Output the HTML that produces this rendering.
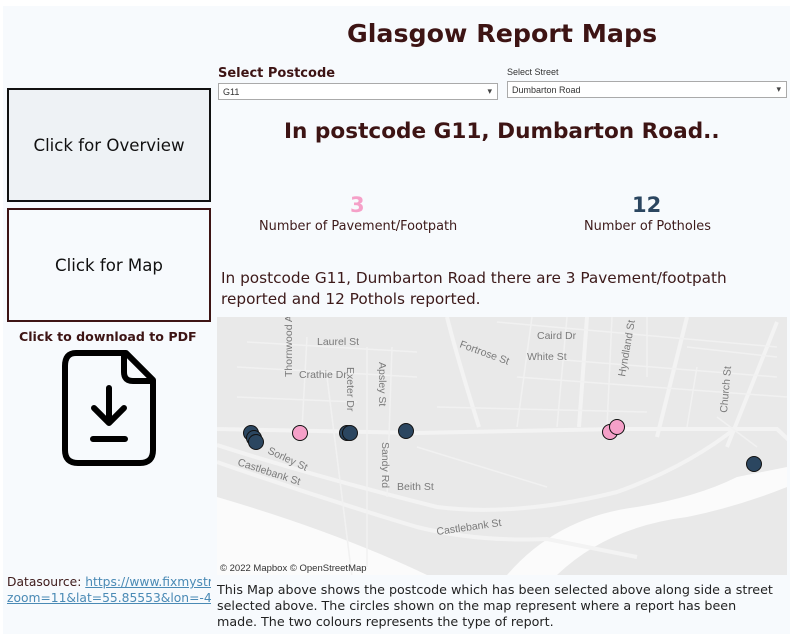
<!DOCTYPE html>
<html><head><meta charset="utf-8"><style>
*{margin:0;padding:0;box-sizing:border-box}
body{width:790px;height:634px;background:#fff;position:relative;overflow:hidden;font-family:"DejaVu Sans","Liberation Sans",sans-serif;color:#3d1a1a}
.bg{position:absolute;left:3px;top:6px;width:787px;height:628px;background:#f7fafd}
.abs{position:absolute}
.btn{position:absolute;left:7px;width:204px;border:2px solid #111;display:flex;align-items:center;justify-content:center;font-size:16.6px;color:#111}
.sel{position:absolute;height:17px;border:1px solid #aaa;background:#fff;font-size:9px;color:#333;padding:3px 0 0 4px;font-family:"Liberation Sans",sans-serif}
.sel:after{content:"▾";position:absolute;right:5px;top:2px;font-size:9px;color:#444}
</style></head><body>
<div class="bg"></div>
<div class="abs" style="left:347px;top:19px;font-size:25.3px;font-weight:bold;color:#3d1414">Glasgow Report Maps</div>
<div class="abs" style="left:218px;top:66px;font-size:13px;font-weight:bold;color:#3d1414">Select Postcode</div>
<div class="sel" style="left:218px;top:83px;width:280px">G11</div>
<div class="abs" style="left:507px;top:67px;font-size:9px;color:#333;font-family:'Liberation Sans',sans-serif">Select Street</div>
<div class="sel" style="left:507px;top:81px;width:280px">Dumbarton Road</div>
<div class="abs" style="left:284px;top:119px;font-size:21.6px;font-weight:bold;color:#3d1414">In postcode G11, Dumbarton Road..</div>
<div class="btn" style="top:88px;height:114px;background:#eef2f5">Click for Overview</div>
<div class="btn" style="top:208px;height:114px;border-color:#3d1414;background:#f7fafd">Click for Map</div>
<div class="abs" style="left:19px;top:329px;font-size:12.6px;font-weight:bold;color:#3d1414">Click to download to PDF</div>
<svg class="abs" style="left:62px;top:350px" width="94" height="116" viewBox="0 0 94 116"><path d="M14 3H64L91 30V100Q91 113 78 113H16Q3 113 3 100V16Q3 3 14 3Z" fill="none" stroke="#000" stroke-width="6" stroke-linejoin="round"/><path d="M62 4V22Q62 31 71 31H90" fill="none" stroke="#000" stroke-width="6"/><path d="M47 38V72M32 58L47 73L62 58M31 89H63" fill="none" stroke="#000" stroke-width="6" stroke-linecap="round" stroke-linejoin="round"/></svg>
<div class="abs" style="left:350px;top:193px;font-size:21px;font-weight:bold;color:#f5a0c8">3</div>
<div class="abs" style="left:259px;top:219px;font-size:12.9px;color:#3d1a1a">Number of Pavement/Footpath</div>
<div class="abs" style="left:632px;top:193px;font-size:21px;font-weight:bold;color:#2b4660">12</div>
<div class="abs" style="left:584px;top:219px;font-size:12.9px;color:#3d1a1a">Number of Potholes</div>
<div class="abs" style="left:221px;top:268px;font-size:15.3px;line-height:21px;color:#3d1a1a;width:565px">In postcode G11, Dumbarton Road there are 3 Pavement/footpath reported and 12 Pothols reported.</div>
<svg class="abs" style="left:217px;top:317px" width="570" height="258" viewBox="0 0 570 258">
<rect width="570" height="258" fill="#e9e9e9"/>
<path d="M0 180Q120 215 210 258H0Z" fill="#fbfbfb"/>
<path d="M290 258Q340 200 420 190Q480 180 520 160L570 150V170Q520 190 470 200Q390 210 340 258Z" fill="#fbfbfb"/>
<g fill="none" stroke="#f3f3f3" stroke-width="4">
<path d="M0 112L200 116L400 112L560 112L590 140"/>
<path d="M0 128Q100 160 220 190Q300 200 400 175Q470 150 520 110"/>
<path d="M0 145Q100 180 200 210Q260 225 330 222L420 240"/>
<path d="M230 0Q240 40 262 110"/>
<path d="M370 0L362 110M470 0L440 120M560 5L510 130"/>
</g>
<g fill="none" stroke="#f1f1f1" stroke-width="1.5">
<path d="M30 25L200 35M20 50L200 60M20 80L140 85M110 60L140 300M90 20L85 112M150 30L150 250M175 30L170 180M220 90L430 95M280 5L560 30M310 40L560 60M300 60L570 80M315 0L300 110M350 0L340 110M430 0L430 60M470 30L560 40M480 50L470 110M500 100L540 130M200 130L330 170M395 0L390 110"/>
</g>
<g font-family="Liberation Sans,sans-serif" font-size="10.5" fill="#7a7a7a">
<text x="100" y="28">Laurel St</text><text x="82" y="61">Crathie Dr</text><text x="180" y="173">Beith St</text>
<text x="310" y="43">White St</text><text x="320" y="22">Caird Dr</text>
<text x="20" y="148" transform="rotate(18 20 148)">Castlebank St</text>
<text x="50" y="136" transform="rotate(25 50 136)">Sorley St</text>
<text x="220" y="218" transform="rotate(-8 220 218)">Castlebank St</text>
<text x="242" y="30" transform="rotate(20 242 30)">Fortrose St</text>
<text x="75" y="60" transform="rotate(-90 75 60)">Thornwood Ave</text>
<text x="130" y="50" transform="rotate(90 130 50)">Exeter Dr</text>
<text x="162" y="45" transform="rotate(90 162 45)">Apsley St</text>
<text x="165" y="105" transform="rotate(90 165 105)" dx="20">Sandy Rd</text>
<text x="408" y="60" transform="rotate(-80 408 60)">Hyndland St</text>
<text x="510" y="96" transform="rotate(-85 510 96)">Church St</text>
</g>
<g stroke="#111" stroke-width="1">
<circle cx="34" cy="116" r="7.5" fill="#2b4660"/><circle cx="37" cy="121" r="7.5" fill="#2b4660"/><circle cx="39" cy="125" r="7.5" fill="#2b4660"/>
<circle cx="83" cy="116" r="7.5" fill="#f5a0c8"/>
<circle cx="130" cy="116" r="7.5" fill="#2b4660"/><circle cx="133" cy="116" r="7.5" fill="#2b4660"/>
<circle cx="189" cy="114" r="7.5" fill="#2b4660"/>
<circle cx="393" cy="115" r="7.5" fill="#f5a0c8"/><circle cx="400" cy="110" r="7.5" fill="#f5a0c8"/>
<circle cx="537" cy="147" r="7.5" fill="#2b4660"/>
</g>
<text x="3" y="254" font-family="Liberation Sans,sans-serif" font-size="9.5" fill="#333">© 2022 Mapbox © OpenStreetMap</text>
</svg>
<div class="abs" style="left:217px;top:582px;font-size:12.7px;line-height:16px;color:#222;width:562px">This Map above shows the postcode which has been selected above along side a street selected above. The circles shown on the map represent where a report has been made. The two colours represents the type of report.</div>
<div class="abs" style="left:7px;top:574px;width:204px;overflow:hidden;white-space:nowrap;font-size:12.3px;line-height:16px;color:#3d1a1a">Datasource: <span style="color:#4a8ab5;text-decoration:underline">https://www.fixmystreet.com</span><br><span style="color:#4a8ab5;text-decoration:underline">zoom=11&amp;lat=55.85553&amp;lon=-4.3</span></div>
</body></html>
